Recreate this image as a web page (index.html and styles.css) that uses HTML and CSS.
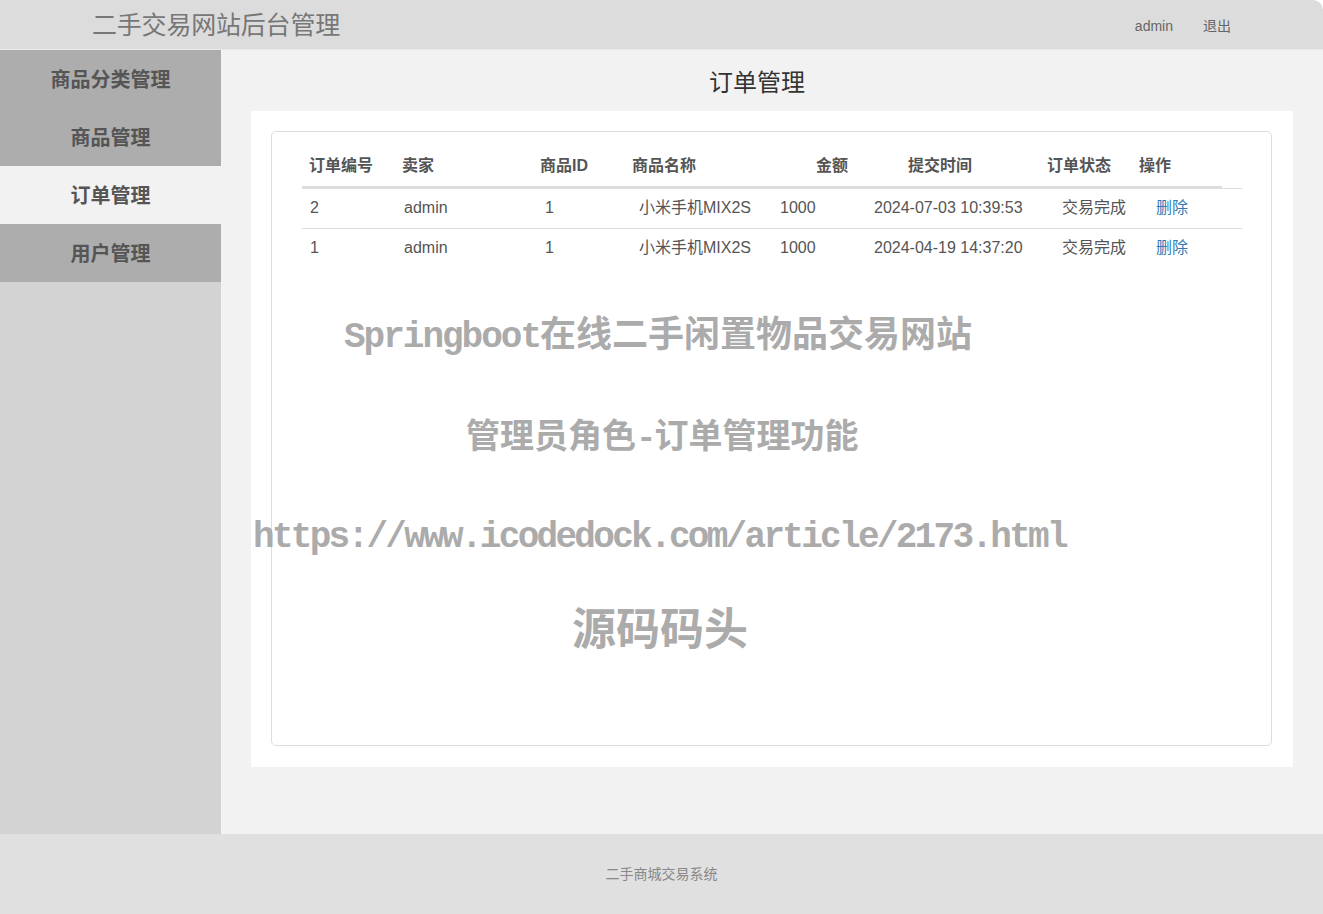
FILE: index.html
```html
<!DOCTYPE html>
<html lang="zh-CN">
<head>
<meta charset="utf-8">
<title>订单管理</title>
<link rel="stylesheet" href="styles.css">
</head>
<body>
<div class="page">
  <header class="topbar">
    <div class="brand">二手交易网站后台管理</div>
    <nav class="usernav">
      <a class="navlink" href="#">admin</a>
      <a class="navlink" href="#">退出</a>
    </nav>
  </header>
  <div class="middle">
    <aside class="sidebar">
      <a class="menu-item" href="#">商品分类管理</a>
      <a class="menu-item" href="#">商品管理</a>
      <a class="menu-item active" href="#">订单管理</a>
      <a class="menu-item" href="#">用户管理</a>
    </aside>
    <main class="main">
      <h1 class="page-title">订单管理</h1>
      <section class="panel">
        <div class="card">
          <div class="thead">
            <div class="th">订单编号</div>
            <div class="th">卖家</div>
            <div class="th">商品ID</div>
            <div class="th">商品名称</div>
            <div class="th">金额</div>
            <div class="th">提交时间</div>
            <div class="th">订单状态</div>
            <div class="th">操作</div>
          </div>
          <div class="tbody">
            <div class="tr">
              <div class="td">2</div>
              <div class="td">admin</div>
              <div class="td">1</div>
              <div class="td">小米手机MIX2S</div>
              <div class="td">1000</div>
              <div class="td">2024-07-03 10:39:53</div>
              <div class="td">交易完成</div>
              <div class="td"><a class="del" href="#">删除</a></div>
            </div>
            <div class="tr">
              <div class="td">1</div>
              <div class="td">admin</div>
              <div class="td">1</div>
              <div class="td">小米手机MIX2S</div>
              <div class="td">1000</div>
              <div class="td">2024-04-19 14:37:20</div>
              <div class="td">交易完成</div>
              <div class="td"><a class="del" href="#">删除</a></div>
            </div>
          </div>
        </div>
      </section>
    </main>
  </div>
  <footer class="footer">二手商城交易系统</footer>
</div>
<div class="watermark wm1"><span class="latin">Springboot</span>在线二手闲置物品交易网站</div>
<div class="watermark wm2">管理员角色<span class="dash">-</span>订单管理功能</div>
<div class="watermark wm3">https://www.icodedock.com/article/2173.html</div>
<div class="watermark wm4">源码码头</div>
</body>
</html>
```
FILE: styles.css
```css
* { box-sizing: border-box; }
html, body { margin: 0; padding: 0; background: #ffffff; }
body {
  font-family: "Liberation Sans", "Noto Sans CJK SC", sans-serif;
  color: #555;
  position: relative;
}
a { text-decoration: none; }
.page {
  display: flex;
  flex-direction: column;
  min-height: 914px;
}
.topbar {
  height: 50px;
  background: #dcdcdc;
  border-bottom: 1px solid #ebebeb;
  border-top-right-radius: 10px;
  display: flex;
  align-items: center;
  justify-content: space-between;
  padding: 0 92px;
}
.brand {
  font-size: 25px;
  color: #777;
  line-height: 30px;
  letter-spacing: -0.2px;
}
.usernav {
  display: flex;
  align-items: center;
  gap: 30px;
  padding-top: 2px;
}
.navlink {
  display: block;
  font-size: 14px;
  line-height: 20px;
  color: #666;
}
.middle {
  flex: 1;
  display: flex;
}
.sidebar {
  width: 221px;
  background: #d3d3d3;
  display: flex;
  flex-direction: column;
}
.menu-item {
  height: 58px;
  line-height: 60px;
  text-align: center;
  background: #adadad;
  color: #555;
  font-size: 20px;
  font-weight: bold;
}
.menu-item.active { background: #f2f2f2; }
.main {
  flex: 1;
  background: #f2f2f2;
  padding: 0 30px 0 30px;
}
.page-title {
  margin: 0;
  height: 61px;
  padding-top: 13px;
  line-height: 40px;
  font-size: 24px;
  font-weight: normal;
  color: #333;
  text-align: center;
  position: relative;
  left: -15px;
}
.panel {
  background: #fff;
  height: 656px;
  padding: 20px 21px 21px 20px;
}
.card {
  height: 615px;
  border: 1px solid #dddddd;
  border-radius: 5px;
  padding: 13px 29px 0 30px;
}
.thead {
  display: grid;
  grid-template-columns: 93px 138px 92px 184px 92px 139px 92px 90px;
  width: 920px;
  height: 43px;
  border-bottom: 2px solid #dddddd;
}
.th {
  padding-left: 7px;
  line-height: 41px;
  font-size: 16px;
  font-weight: bold;
  color: #555;
  white-space: nowrap;
}
.tbody { width: 940px; }
.tr {
  display: grid;
  grid-template-columns: 94px 141px 94px 141px 94px 188px 94px 94px;
  height: 40px;
  border-top: 1px solid #dddddd;
}
.td {
  padding-left: 8px;
  line-height: 38px;
  font-size: 16px;
  color: #555;
  white-space: nowrap;
}
.del { color: #337ab7; }
.footer {
  height: 80px;
  background: #e0e0e0;
  text-align: center;
  line-height: 80px;
  font-size: 14px;
  color: #888;
}
.watermark {
  position: absolute;
  font-family: "Liberation Mono", "Noto Sans CJK SC", monospace;
  font-weight: bold;
  color: #ababab;
  white-space: nowrap;
  line-height: 40px;
}
.latin { letter-spacing: -2px; }
.dash { letter-spacing: -2px; }
.wm1 { left: 344px; top: 318px; font-size: 36px; }
.wm2 { left: 466px; top: 419px; font-size: 34px; }
.wm3 { left: 253px; top: 518px; font-size: 36px; letter-spacing: -2.7px; }
.wm4 { left: 572px; top: 608px; font-size: 44px; line-height: 50px; }
```
